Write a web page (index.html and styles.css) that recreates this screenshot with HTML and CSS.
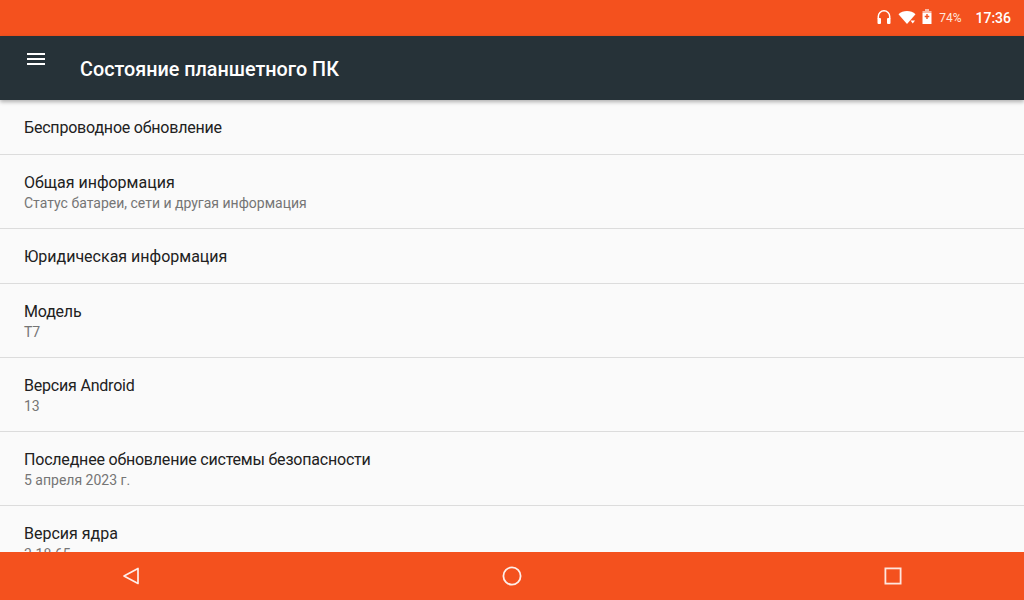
FILE: index.html
```html
<!DOCTYPE html>
<html lang="ru">

<head>
    <meta charset="UTF-8">
    <meta name="viewport" content="width=device-width, initial-scale=1.0">
    <title>Состояние планшетного ПК</title>
    <link rel="stylesheet" href="styles.css">
</head>

<body>
    <div class="status-bar">
        <svg class="status-icon" width="16" height="16" viewBox="0 0 16 16">
            <path d="M2.300 9V6.500a5.700 5.700 0 0 1 11.400 0V9" fill="none" stroke="#fff" stroke-width="1.500" />
            <rect x="1.500" y="8" width="3.500" height="6" rx="1" fill="#fff" />
            <rect x="11" y="8" width="3.500" height="6" rx="1" fill="#fff" />
        </svg>
        <svg class="status-icon wifi-icon" width="18" height="16" viewBox="0 0 18 16">
            <path d="M0.500 4.200C2.800 2.200 5.700 1 9 1s6.200 1.200 8.500 3.200L9 14z" fill="#fff" />
            <path d="M12.500 10.500h4.500l-2.250 3z" fill="#fff" />
        </svg>
        <svg class="status-icon battery-icon" width="10" height="16" viewBox="0 0 10 16">
            <rect x="3" y="0" width="4" height="2" fill="#fff" fill-opacity="0.6" />
            <rect x="0.500" y="2" width="9" height="2" fill="#fff" fill-opacity="0.6" />
            <path d="M0.500 4h9v11h-9z" fill="#fff" />
            <path d="M5 5v5M2.700 7.500h4.600" stroke="#f4511e" stroke-width="1.400" />
        </svg>
        <span class="battery-level">74%</span>
        <span class="clock">17:36</span>
    </div>

    <div class="toolbar">
        <div class="menu-button">
            <span></span>
            <span></span>
            <span></span>
        </div>
        <h1>Состояние планшетного ПК</h1>
    </div>

    <div class="settings-list">
        <div class="settings-item">
            <div class="item-title tight">Беспроводное обновление</div>
        </div>
        <div class="settings-item">
            <div class="item-title">Общая информация</div>
            <div class="item-summary">Статус батареи, сети и другая информация</div>
        </div>
        <div class="settings-item">
            <div class="item-title">Юридическая информация</div>
        </div>
        <div class="settings-item">
            <div class="item-title tight">Модель</div>
            <div class="item-summary">T7</div>
        </div>
        <div class="settings-item">
            <div class="item-title tight">Версия Android</div>
            <div class="item-summary">13</div>
        </div>
        <div class="settings-item">
            <div class="item-title tight">Последнее обновление системы безопасности</div>
            <div class="item-summary">5 апреля 2023 г.</div>
        </div>
        <div class="settings-item">
            <div class="item-title">Версия ядра</div>
            <div class="item-summary">3.18.65</div>
        </div>
    </div>

    <div class="nav-bar">
        <svg width="20" height="20" viewBox="0 0 20 20">
            <path d="M17 2.500v15L3 10z" fill="none" stroke="#fff" stroke-width="1.700" stroke-linejoin="round" opacity="0.9" />
        </svg>
        <svg width="20" height="20" viewBox="0 0 20 20">
            <circle cx="10" cy="10" r="8.600" fill="none" stroke="#fff" stroke-width="1.800" opacity="0.9" />
        </svg>
        <svg width="20" height="20" viewBox="0 0 20 20">
            <rect x="2.400" y="2.400" width="15.200" height="15.200" fill="none" stroke="#fff" stroke-width="1.800" opacity="0.85" />
        </svg>
    </div>
</body>

</html>
```

FILE: styles.css
```css
/* CSS styles */
html,
body {
    height: 100%;
}

body {
    margin: 0;
    padding: 0;
    display: flex;
    flex-direction: column;
    overflow: hidden;
    font-family: Roboto, Arial, sans-serif;
    background-color: #fafafa;
    color: #212121;
}

.status-bar {
    flex: 0 0 36px;
    display: flex;
    align-items: center;
    justify-content: flex-end;
    padding-right: 13px;
    background-color: #f4511e;
    color: #fff;
}

.status-icon {
    flex: none;
}

.wifi-icon {
    margin-left: 6px;
}

.battery-icon {
    margin-left: 6px;
    margin-bottom: 2px;
}

.battery-level {
    margin-left: 7px;
    font-size: 12px;
    color: #ffe6dc;
}

.clock {
    margin-left: 14px;
    font-size: 14px;
    font-weight: 500;
}

.toolbar {
    flex: 0 0 64px;
    position: relative;
    z-index: 1;
    display: flex;
    background-color: #263238;
    box-shadow: 0 2px 4px rgba(0, 0, 0, 0.3);
    color: #fff;
}

.menu-button {
    display: flex;
    flex-direction: column;
    gap: 3px;
    width: 18px;
    margin: 17px 0 0 27px;
}

.menu-button span {
    display: block;
    height: 2px;
    background-color: #fff;
}

.toolbar h1 {
    height: 64px;
    margin: 0 0 0 35px;
    font-size: 19.8px;
    font-weight: 500;
    line-height: 67px;
}

.settings-list {
    flex: 1;
    min-height: 0;
    overflow: hidden;
}

.settings-item {
    box-sizing: border-box;
    min-height: 55px;
    padding: 18px 24px 15px;
    border-bottom: 1px solid #dcdcdc;
}

.item-title {
    font-size: 16px;
    line-height: 20px;
}

.item-title.tight {
    letter-spacing: -0.2px;
}

.item-summary {
    font-size: 14px;
    line-height: 20px;
    color: #757575;
}

.nav-bar {
    flex: 0 0 48px;
    position: relative;
    z-index: 1;
    display: flex;
    align-items: center;
    justify-content: space-between;
    padding: 0 121px;
    background-color: #f4511e;
}
```
